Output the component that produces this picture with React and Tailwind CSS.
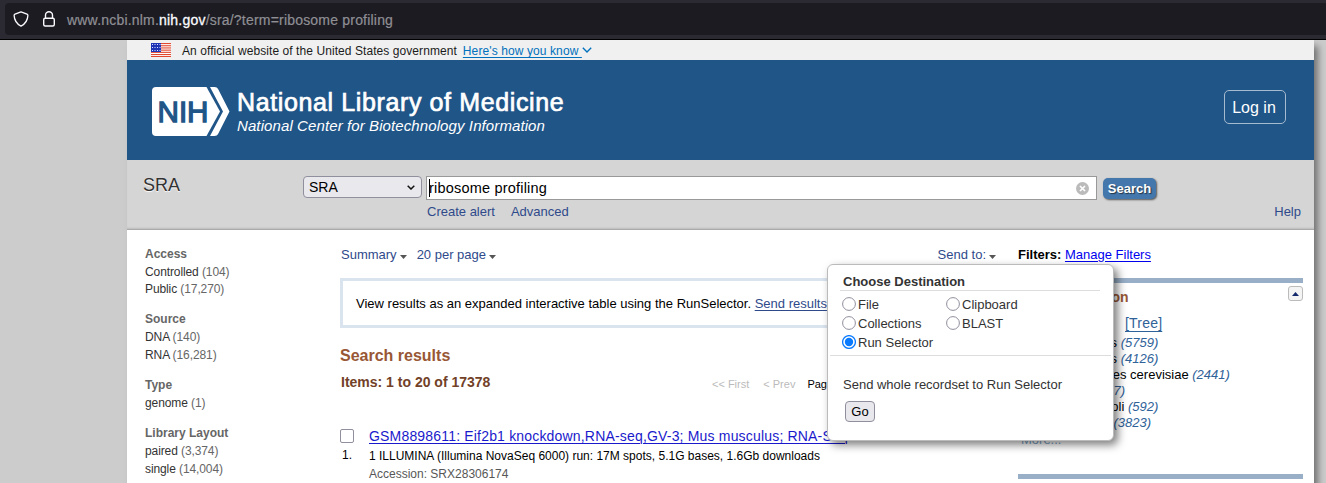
import React from "react";

const filterGroups = [
  { title: "Access", rows: [["Controlled", "104"], ["Public", "17,270"]], gap: "mb-3", tight: true },
  { title: "Source", rows: [["DNA", "140"], ["RNA", "16,281"]], gap: "mb-3" },
  { title: "Type", rows: [["genome", "1"]], gap: "mb-3" },
  { title: "Library Layout", rows: [["paired", "3,374"], ["single", "14,004"]], gap: "" },
];

const organisms = [
  ["Homo sapiens", "5759"],
  ["Mus musculus", "4126"],
  ["Saccharomyces cerevisiae", "2441"],
  ["Zea mays", "607"],
  ["Escherichia coli", "592"],
  ["All other taxa", "3823"],
];

function Caret() {
  return (
    <svg className="mt-1 h-1 w-[7px] shrink-0" viewBox="0 0 7 4">
      <path d="M0 0h7L3.5 4z" fill="#555" />
    </svg>
  );
}

function AddressBar() {
  return (
    <div className="relative z-10 h-10 border-b border-black bg-[#2b2a33] pl-[5px] pt-[3px]">
      <div className="flex h-8 items-center rounded-l bg-[#1c1b22] pl-2">
        <svg className="h-4 w-4" viewBox="0 0 16 16" fill="none" stroke="#fbfbfe" strokeWidth="1.3" strokeLinejoin="round">
          <path d="M8 .9 14 3.2c.7.3.9.7.9 1.2C14.700 9 12.300 12.900 8 15.100 3.700 12.900 1.300 9 1.100 4.400c0-.5.2-.9.900-1.200z" />
        </svg>
        <svg className="ml-3 h-4 w-4" viewBox="0 0 16 16" fill="none" stroke="#fbfbfe" strokeWidth="1.4">
          <rect x="2.700" y="7.200" width="10.600" height="7.800" rx="1.500" />
          <path d="M4.500 7V4.300a3.500 3.500 0 0 1 7 0V7" />
        </svg>
        <div className="ml-[10px] whitespace-pre pt-[2px] text-[14px] leading-5 tracking-[0.2px] text-[#8f8f94] [-webkit-text-stroke:0.2px_currentColor]">
          www.ncbi.nlm.<span className="text-[#fbfbfe] [-webkit-text-stroke:0.3px_currentColor]">nih.gov</span>/sra/?term=ribosome profiling
        </div>
      </div>
    </div>
  );
}

function GovBanner() {
  return (
    <div className="flex h-5 items-center bg-[#f0f0f0] pl-6 text-[12px]">
      <svg className="h-[14px] w-5" viewBox="0 0 20 14">
        <rect width="20" height="14" fill="#fff" />
        {[0, 2.2, 4.4, 6.600, 8.800, 11, 13].map((y) => (
          <rect key={y} y={y} width="20" height="1.100" fill="#e2482e" />
        ))}
        <rect width="10" height="9" fill="#1f34b5" />
        {[1.500, 4.500, 7.500].map((y) =>
          [1.500, 4, 6.500, 9].map((x) => <rect key={x + "-" + y} x={x - 0.500} y={y - 0.500} width="1" height="1" fill="#dfe3ff" />)
        )}
      </svg>
      <span className="ml-[11px] whitespace-nowrap pt-[2px] tracking-[0.07px] text-[#1b1b1b]">An official website of the United States government</span>
      <a className="ml-[6px] whitespace-pre pt-[2px] tracking-[0.1px] text-[#0071bc] underline underline-offset-2">{"Here's how you know "}</a>
      <svg className="h-[6px] w-[10px]" viewBox="0 0 10 6" fill="none" stroke="#0071bc" strokeWidth="1.400">
        <path d="M.8.8 5 4.900 9.200.8" />
      </svg>
    </div>
  );
}

function Header() {
  return (
    <div className="flex h-[100px] items-start justify-between bg-[#205588] pl-[25px] pr-7 text-white">
      <div className="flex pt-[27px]">
        <svg className="h-[49px] w-[78px]" viewBox="0 0 78 49">
          <path d="M4 0H54.500L68 24.500 54.500 49H4a4 4 0 0 1-4-4V4a4 4 0 0 1 4-4z" fill="#fff" />
          <path d="M58 0h4.500c1.800 0 2.800.7 3.700 2.200L77.500 24.500 66.200 46.800c-.9 1.500-1.900 2.200-3.700 2.200H58L71 24.500z" fill="#fff" />
          <text x="5.500" y="35" fontSize="30" textLength="51" lengthAdjust="spacingAndGlyphs" fill="#205588" stroke="#205588" strokeWidth="1.300" className="font-['Liberation_Sans',sans-serif]">NIH</text>
        </svg>
        <div className="pl-[7px]">
          <div className="whitespace-nowrap text-[25px] leading-[30px] tracking-[0.62px] [-webkit-text-stroke:0.7px_white]">National Library of Medicine</div>
          <div className="whitespace-nowrap text-[15px] italic leading-[18px] tracking-[0.1px]">National Center for Biotechnology Information</div>
        </div>
      </div>
      <button className="mt-[30px] h-[34px] w-[62px] whitespace-nowrap rounded-[5px] border border-[#a6bbcf] pr-[2px] pt-px text-[16px]">Log in</button>
    </div>
  );
}

function SearchBar() {
  return (
    <div className="flex h-[70px] items-start border-b border-[#aaa] bg-[#d5d5d5] pl-4 shadow-[inset_0_-2px_2px_-1px_#bbb]">
      <div className="w-[160px] pt-[14px] text-[18px] leading-[22px] text-[#333] [text-shadow:0_1px_1px_#fff]">SRA</div>
      <div className="mt-4 flex h-[22px] w-[119px] items-center justify-between rounded border border-[#8f8f9d] bg-[#e9e9ed] pl-[5px] pr-[6px] text-[14px] text-black">
        SRA
        <svg className="h-[5px] w-2" viewBox="0 0 8 5" fill="none" stroke="#111" strokeWidth="1.500">
          <path d="M.7.7 4 4 7.300.7" />
        </svg>
      </div>
      <div className="ml-1 w-[671px] pt-4">
        <div className="flex h-6 items-center justify-between border border-[#999] bg-white pl-[2px] pr-[7px]">
          <div className="flex items-center text-[14.500px] tracking-[0.2px] text-black">
            <span className="-mr-px h-[18px] w-px bg-black" />
            <span className="pt-px">ribosome profiling</span>
          </div>
          <svg className="h-[13px] w-[13px]" viewBox="0 0 13 13">
            <circle cx="6.500" cy="6.500" r="6.500" fill="#bbb" />
            <path d="M4 4l5 5M9 4l-5 5" stroke="#fff" strokeWidth="1.700" />
          </svg>
        </div>
        <div className="flex gap-4 pl-px pt-1 text-[13px] leading-4 text-[#2f4a8b]">
          <a>Create alert</a>
          <a>Advanced</a>
        </div>
      </div>
      <div className="ml-[6px] flex grow flex-col pr-[13px] pt-[18px]">
        <button className="h-[21px] w-[53px] rounded-[5px] bg-[#4478ad] text-[13px] font-bold leading-[21px] text-white shadow-[1px_1px_2px_#555] [text-shadow:1px_1px_1px_#234]">Search</button>
        <a className="self-end pt-[5px] text-[13px] leading-4 text-[#2f4a8b]">Help</a>
      </div>
    </div>
  );
}

function Sidebar() {
  return (
    <div className="w-[213px] shrink-0 pl-[18px] pt-[15px] text-[12px] leading-[18px]">
      {filterGroups.map((g) => (
        <div key={g.title} className={g.gap}>
          <div className="font-bold text-[#666]">{g.title}</div>
          {g.rows.map(([name, count], i) => (
            <div key={name} className={g.tight && i === 1 ? "-mt-px tracking-[-0.1px] text-[#333]" : "tracking-[-0.1px] text-[#333]"}>
              {name} <span className="text-[#666]">({count})</span>
            </div>
          ))}
        </div>
      ))}
    </div>
  );
}

function Results() {
  return (
    <div className="w-[658px] shrink-0">
      <div className="flex h-12 items-start pl-px pt-4 text-[13px] leading-[18px] text-[#2f4a8b]">
        <div className="flex items-center gap-[3px]">Summary <Caret /></div>
        <div className="ml-[10px] flex items-center gap-[3px]">20 per page <Caret /></div>
        <div className="ml-auto flex items-center gap-[3px] pr-[2px]">Send to: <Caret /></div>
      </div>
      <div className="flex h-[50px] items-center border-[3px] border-[#dae4ee] pl-[13px] pt-[2px] text-[13px] text-black">
        <span className="whitespace-pre">View results as an expanded interactive table using the RunSelector. </span>
        <a className="whitespace-nowrap text-[#2f4a8b] underline underline-offset-2">Send results</a>
      </div>
      <h2 className="mt-[18px] text-[16px] font-bold leading-5 text-[#985735]">Search results</h2>
      <div className="mt-1 flex items-center pl-px leading-5">
        <h3 className="w-[371px] text-[14px] font-bold text-[#724128]">Items: 1 to 20 of 17378</h3>
        <div className="flex gap-[14px] pt-1 text-[11px] text-[#bbb]">
          <span>&lt;&lt; First</span>
          <span className="-mr-[2px]">&lt; Prev</span>
          <span className="text-black">Page</span>
        </div>
      </div>
      <div className="mt-8 flex">
        <div className="w-7">
          <div className="mt-[3px] h-[14px] w-[14px] rounded-[2px] border border-[#8f8f9d] bg-white" />
          <div className="pl-[2px] pt-[3px] text-[12px] leading-[18px] text-black">1.</div>
        </div>
        <div className="whitespace-nowrap pl-[1px]">
          <a className="block text-[14px] leading-5 tracking-[0.18px] text-[#1a1acc] underline decoration-1 underline-offset-2">GSM8898611: Eif2b1 knockdown,RNA-seq,GV-3; Mus musculus; RNA-Seq</a>
          <div className="pt-px text-[12px] leading-[18px] text-black">1 ILLUMINA (Illumina NovaSeq 6000) run: 17M spots, 5.1G bases, 1.6Gb downloads</div>
          <div className="text-[12px] leading-[18px] text-[#575757]">Accession: SRX28306174</div>
        </div>
      </div>
    </div>
  );
}

function Discovery() {
  return (
    <div className="ml-5 w-[285px] shrink-0">
      <div className="h-12 pt-4 text-[13px] leading-[18px] text-black">
        <b>Filters:</b> <a className="text-[#0000ee] underline underline-offset-2">Manage Filters</a>
      </div>
      <div className="h-[196px] border-t-[5px] border-[#98afc7] text-[13px] leading-4 text-black">
        <div className="flex h-[33px] items-start justify-between">
          <h3 className="pt-[5px] text-[14px] font-bold leading-[18px] tracking-[-0.1px] text-[#985735]">Results by taxon</h3>
          <div className="mt-[3px] flex h-[15px] w-[15px] items-center justify-center rounded-[3px] border border-[#bbb] bg-[#f4f4f4]">
            <svg className="h-1 w-[7px]" viewBox="0 0 7 4">
              <path d="M3.500 0 7 4H0z" fill="#14296b" />
            </svg>
          </div>
        </div>
        <div className="flex h-[19px] items-start whitespace-pre text-[14px] leading-[18px]">
          <span className="w-[107px] text-[#555]">Top Organisms</span>
          <a className="leading-[15px] tracking-[0.2px] text-[#2f6299] underline underline-offset-[3px]">[Tree]</a>
        </div>
        <div className="pl-4">
          {organisms.map(([name, n]) => (
            <div key={name} className="whitespace-nowrap">
              {name} <i className="text-[#2f6299]">({n})</i>
            </div>
          ))}
        </div>
        <a className="block pl-[3px] pt-px text-[#7fa3c7]">More...</a>
      </div>
      <div className="h-[5px] bg-[#98afc7]" />
    </div>
  );
}

function Radio({ label, checked }) {
  return (
    <label className="flex h-[19px] w-[104px] items-center gap-[2px] whitespace-nowrap">
      <svg className="h-[14px] w-[14px] shrink-0" viewBox="0 0 14 14">
        <circle cx="7" cy="7" r="6.400" fill="#fff" stroke={checked ? "#0a7aff" : "#8f8f9d"} strokeWidth={checked ? 1.300 : 1} />
        {checked && <circle cx="7" cy="7" r="4.200" fill="#0a7aff" />}
      </svg>
      <span className="pt-[2px]">{label}</span>
    </label>
  );
}

function SendToMenu() {
  return (
    <div className="absolute left-[700px] top-[34px] h-[177px] w-[287px] rounded-md border border-[#bbb] bg-white text-[13px] text-[#333] shadow-[4px_4px_8px_rgba(0,0,0,0.5)]">
      <div className="ml-3 mr-[13px] h-[26px] border-b border-[#ddd] pl-[3px] pt-2 font-bold leading-[18px]">Choose Destination</div>
      <div className="mx-[2px] flex h-[65px] flex-wrap content-start border-b border-[#ddd] pl-3 pt-[3px]">
        <Radio label="File" />
        <Radio label="Clipboard" />
        <Radio label="Collections" />
        <Radio label="BLAST" />
        <Radio label="Run Selector" checked />
      </div>
      <div className="pl-[15px] pt-5 leading-[18px]">Send whole recordset to Run Selector</div>
      <button className="ml-[17px] mt-[7px] block h-[21px] w-[30px] rounded border border-[#8f8f9d] bg-[#e9e9ed] text-[13px] leading-[19px] text-black">Go</button>
    </div>
  );
}

export default function App() {
  return (
    <div className="h-[483px] overflow-hidden bg-[#ccc] font-['Liberation_Sans',Arial,sans-serif]">
      <AddressBar />
      <div className="ml-[127px] h-[500px] w-[1187px] bg-white shadow-[5px_5px_7px_-1px_#707070]">
        <GovBanner />
        <Header />
        <SearchBar />
        <div className="relative flex">
          <Sidebar />
          <Results />
          <Discovery />
          <SendToMenu />
        </div>
      </div>
    </div>
  );
}
